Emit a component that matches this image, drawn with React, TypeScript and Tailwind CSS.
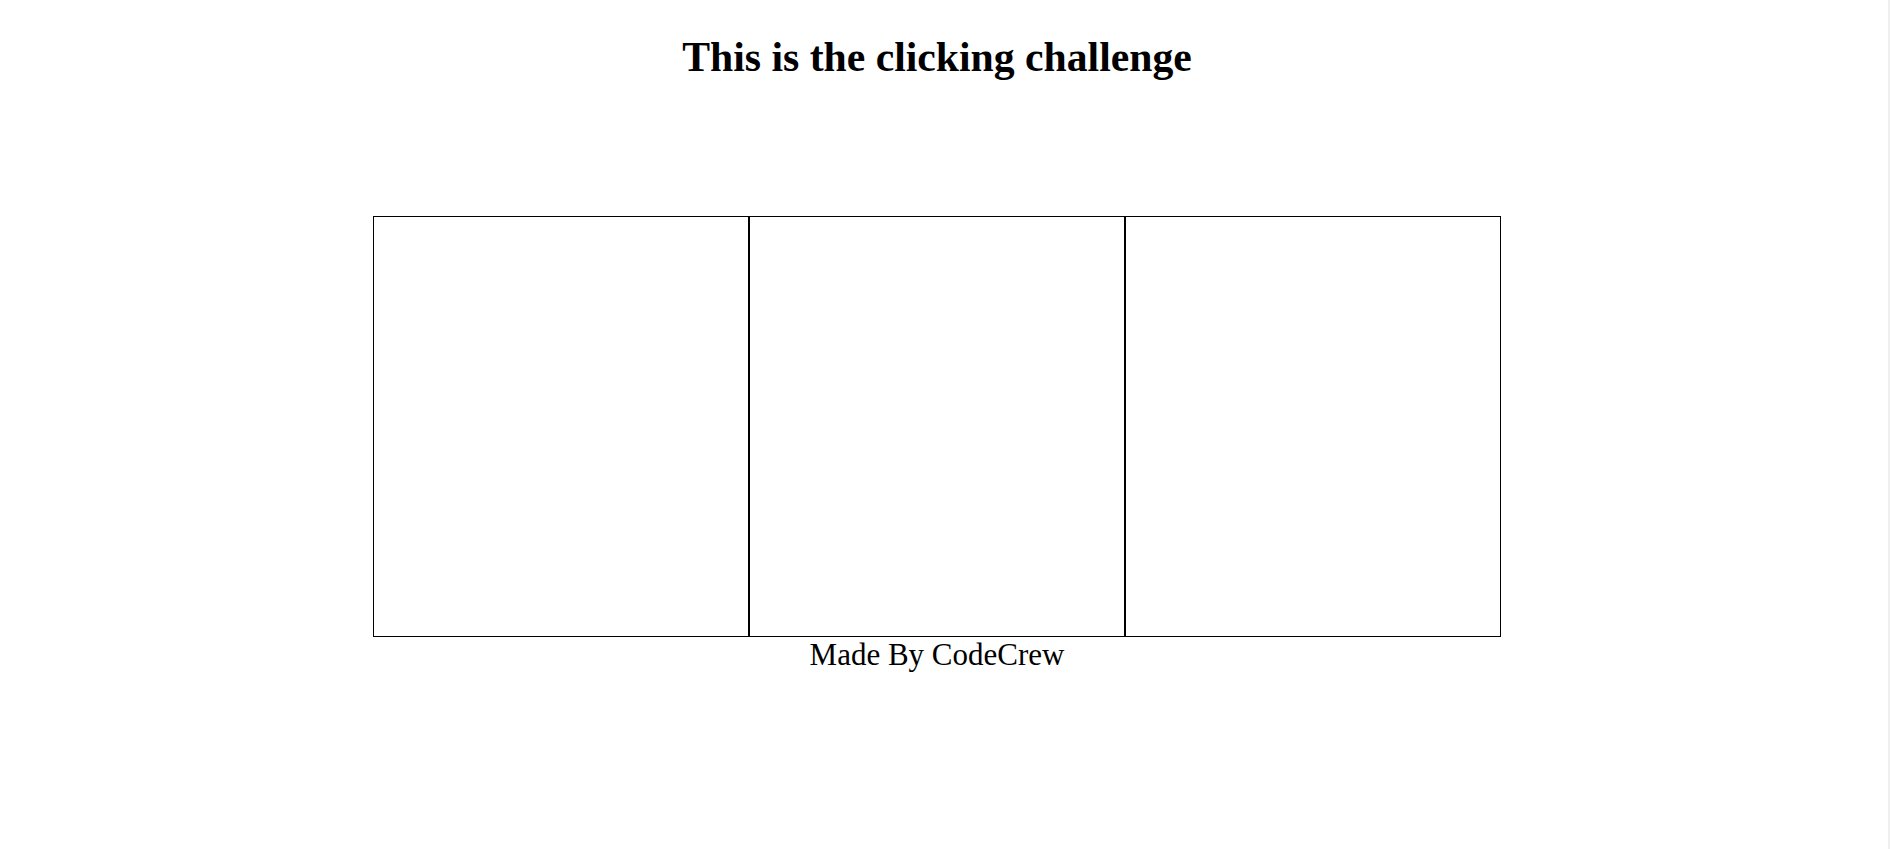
const boxes = [1, 2, 3];

export default function App() {
  return (
    <div className="flex min-h-screen bg-white text-black font-['Liberation_Serif',_'Times_New_Roman',_serif]">
      <div className="w-[1874px] shrink-0">
        <h1 className="pt-[33px] text-center text-[41.7px] leading-[normal] font-bold">This is the clicking challenge</h1>
        <div className="mt-[135px] flex justify-center">
          {boxes.map((b) => (
            <div key={b} className="h-[421px] w-[376px] border border-black" />
          ))}
        </div>
        <p className="text-center text-[31px] leading-[normal]">Made By CodeCrew</p>
      </div>
      <div className="flex-1" />
      <div className="w-[2px] bg-[#efefef]" />
    </div>
  );
}
